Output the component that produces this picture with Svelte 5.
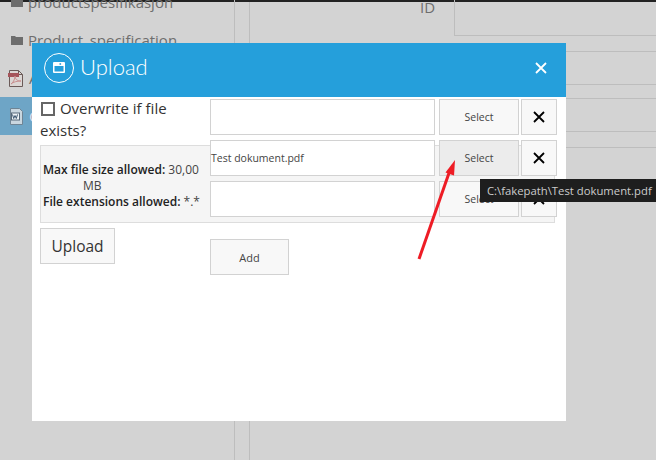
<script>
  const rows = [
    { id: 1, name: '', active: false },
    { id: 2, name: 'Test dokument.pdf', active: true },
    { id: 3, name: '', active: false }
  ];
</script>

<div class="page">
  <div class="topbar"></div>

  <div class="backdrop">
    <aside class="sidebar">
      <div class="tree-item first">
        <svg class="folder" viewBox="0 0 12 10"><path d="M0 1h4l1 1h7v8H0z" /></svg>
        <span>productspesifikasjon</span>
      </div>
      <div class="tree-item">
        <svg class="folder" viewBox="0 0 12 10"><path d="M0 1h4l1 1h7v8H0z" /></svg>
        <span>Product_specification</span>
      </div>
      <div class="tree-item file">
        <svg class="doc" viewBox="0 0 16 17">
          <path d="M1.500.5h9l4 4v12h-13z" fill="#dcd6d4" stroke="#6b5a58" />
          <path d="M10.500.5v4h4" fill="none" stroke="#6b5a58" />
          <rect x="0" y="3" width="11" height="4" fill="#a5545a" />
          <path d="M3 14c3-2 4-6 4-8 0 3 2 5 6 5-4 0-8 1-10 3z" fill="none" stroke="#c98f90" />
        </svg>
        <span>A</span>
      </div>
      <div class="tree-item file selected">
        <svg class="doc" viewBox="0 0 16 17">
          <path d="M2.500.5h9l3 3v13h-12z" fill="#c9d6df" stroke="#6f8494" />
          <rect x="3.500" y="5" width="8" height="7" fill="#eef3f6" stroke="#56697a" />
          <path d="M4.500 6.500l1.200 4 1.300-3 1.300 3 1.200-4" fill="none" stroke="#3c5670" />
        </svg>
        <span>O</span>
      </div>
    </aside>

    <div class="rail"></div>

    <main class="fields">
      <div class="field-row">
        <span class="field-label">ID</span>
        <div class="field-box"></div>
      </div>
      <div class="field-box gap-wide"></div>
      <div class="field-box gap-narrow"></div>
      <div class="field-box gap-wide"></div>
    </main>
  </div>

  <div class="modal">
    <header class="modal-header">
      <div class="title">
        <span class="title-icon">
          <svg viewBox="0 0 12 11" width="12" height="11">
            <path d="M0 1a1 1 0 0 1 1-1h10a1 1 0 0 1 1 1v9a1 1 0 0 1-1 1H1a1 1 0 0 1-1-1z" fill="#fff" />
            <rect x="1.500" y="4" width="9" height="5.500" fill="#259fdb" />
            <rect x="6.500" y="1.200" width="1.600" height="1.600" fill="#259fdb" />
          </svg>
        </span>
        <h2>Upload</h2>
      </div>
      <svg class="close" viewBox="0 0 12 12" width="12" height="12">
        <path d="M1 1l10 10M11 1L1 11" stroke="#fff" stroke-width="1.800" />
      </svg>
    </header>

    <div class="modal-body">
      <div class="left">
        <label class="overwrite">
          <span class="checkbox"></span>
          Overwrite if file exists?
        </label>
        <div class="limits">
          <div><b>Max file size allowed:</b> 30,00</div>
          <div class="unit">MB</div>
          <div><b>File extensions allowed:</b> *.*</div>
        </div>
        <button class="btn upload">Upload</button>
      </div>

      <div class="right">
        {#each rows as row (row.id)}
          <div class="file-row">
            <div class="file-input">{row.name}</div>
            <button class="btn select" class:active={row.active}>Select</button>
            <button class="btn remove" aria-label="Remove">
              <svg viewBox="0 0 12 12" width="12" height="12">
                <path d="M1 1l10 10M11 1L1 11" stroke="#000" stroke-width="1.800" />
              </svg>
            </button>
          </div>
        {/each}
        <button class="btn add">Add</button>
      </div>
    </div>
  </div>

  <div class="tooltip">C:\fakepath\Test dokument.pdf</div>

  <svg class="arrow" viewBox="0 0 656 460" width="656" height="460">
    <path d="M419 259L449 173" stroke="#ee1c25" stroke-width="3" />
    <path d="M455 160L445.500 172.500L454 175.500z" fill="#ee1c25" />
  </svg>
</div>

<style>
  :global(body) {
    margin: 0;
    background: #d3d3d3;
  }

  .page {
    position: relative;
    width: 656px;
    height: 460px;
    overflow: hidden;
    font-family: "Open Sans", "Noto Sans", sans-serif;
    color: #444;
  }

  .topbar {
    height: 2px;
    background: #222;
  }

  .backdrop {
    display: flex;
    height: 458px;
  }

  .sidebar {
    width: 234px;
    flex-shrink: 0;
    margin-top: -19px;
    border-right: 1px solid #bdbdbd;
  }

  .tree-item {
    display: flex;
    align-items: center;
    gap: 5px;
    height: 38px;
    padding-left: 11px;
    font-size: 15px;
    color: #6e6e6e;
  }

  .tree-item.file {
    padding-left: 8px;
  }

  .tree-item.selected {
    background: #6ea5c6;
    color: #dde;
  }

  .folder {
    width: 12px;
    height: 10px;
    fill: #6d6d6d;
  }

  .doc {
    width: 16px;
    height: 17px;
  }

  .rail {
    width: 14px;
    flex-shrink: 0;
    border-right: 1px solid #bdbdbd;
  }

  .fields {
    flex: 1;
    padding-left: 170px;
    display: flex;
    flex-direction: column;
    align-items: flex-end;
  }

  .field-row {
    display: flex;
    margin-top: -2px;
    width: 100%;
  }

  .field-label {
    width: 34px;
    flex-shrink: 0;
    font-size: 15px;
    color: #6e6e6e;
    margin-top: -3px;
  }

  .field-box {
    width: 202px;
    height: 34px;
    box-sizing: border-box;
    border: solid #bdbdbd;
    border-width: 1px 0 1px 1px;
  }

  .field-row .field-box {
    height: 22px;
    border-top: 0;
  }

  .gap-wide {
    margin-top: 15px;
  }

  .gap-narrow {
    margin-top: 13px;
  }

  .field-box:last-child {
    height: 36px;
  }

  .modal {
    position: absolute;
    left: 32px;
    top: 43px;
    width: 534px;
    height: 378px;
    background: #fff;
    display: flex;
    flex-direction: column;
  }

  .modal-header {
    height: 54px;
    box-sizing: border-box;
    flex-shrink: 0;
    background: #259fdb;
    display: flex;
    align-items: center;
    justify-content: space-between;
    padding: 0 19px 5px 12px;
    color: #fff;
  }

  .title {
    display: flex;
    align-items: center;
    gap: 6px;
  }

  .title-icon {
    box-sizing: border-box;
    width: 30px;
    height: 30px;
    border: 1px solid #fff;
    border-radius: 50%;
    display: flex;
    align-items: center;
    justify-content: center;
  }

  h2 {
    margin: -1px 0 0;
    font-family: Lato, "Open Sans", sans-serif;
    font-size: 22px;
    font-weight: 300;
    line-height: 1;
  }

  .modal-body {
    display: flex;
    padding: 2px 0 0 8px;
  }

  .left {
    width: 170px;
    flex-shrink: 0;
  }

  .overwrite {
    display: block;
    font-size: 15px;
    line-height: 22px;
    width: 165px;
    margin-top: -2px;
    margin-bottom: 4px;
    color: #333;
  }

  .checkbox {
    display: inline-block;
    box-sizing: border-box;
    width: 14px;
    height: 14px;
    border: 2px solid #666;
    vertical-align: -2px;
    margin: 0 1px 0 1px;
  }

  .limits {
    box-sizing: border-box;
    width: 515px;
    height: 78px;
    padding: 16px 358px 0 2px;
    background: #f5f5f5;
    border: 1px solid #ddd;
    font-size: 12px;
    line-height: 16px;
    white-space: nowrap;
  }

  .limits b {
    font-weight: 600;
    color: #222;
  }

  .unit {
    padding-left: 40px;
  }

  .btn {
    box-sizing: border-box;
    background: #f8f8f8;
    border: 1px solid #d2d2d2;
    border-radius: 0;
    font-family: inherit;
    color: #444;
    padding: 0;
  }

  .upload {
    display: block;
    width: 75px;
    height: 36px;
    margin-top: 5px;
    font-size: 15.500px;
    color: #333;
  }

  .right {
    position: relative;
    display: flex;
    flex-direction: column;
    gap: 5px;
    width: 347px;
  }

  .file-row {
    display: flex;
    height: 36px;
  }

  .file-input {
    box-sizing: border-box;
    width: 225px;
    height: 36px;
    line-height: 34px;
    background: #fff;
    border: 1px solid #d2d2d2;
    font-size: 10.500px;
  }

  .select {
    width: 80px;
    margin-left: 4px;
    font-size: 10.500px;
  }

  .select.active {
    background: #ececec;
  }

  .remove {
    width: 36px;
    margin-left: 2px;
    display: flex;
    align-items: center;
    justify-content: center;
  }

  .add {
    width: 79px;
    height: 36px;
    margin-top: 17px;
    font-size: 11px;
  }

  .tooltip {
    position: absolute;
    left: 480px;
    top: 179px;
    width: 176px;
    height: 23px;
    line-height: 23px;
    padding-left: 7px;
    box-sizing: border-box;
    background: #1e1e1e;
    color: #ccc;
    font-size: 11.300px;
    white-space: nowrap;
  }

  .arrow {
    position: absolute;
    left: 0;
    top: 0;
    pointer-events: none;
  }
</style>
